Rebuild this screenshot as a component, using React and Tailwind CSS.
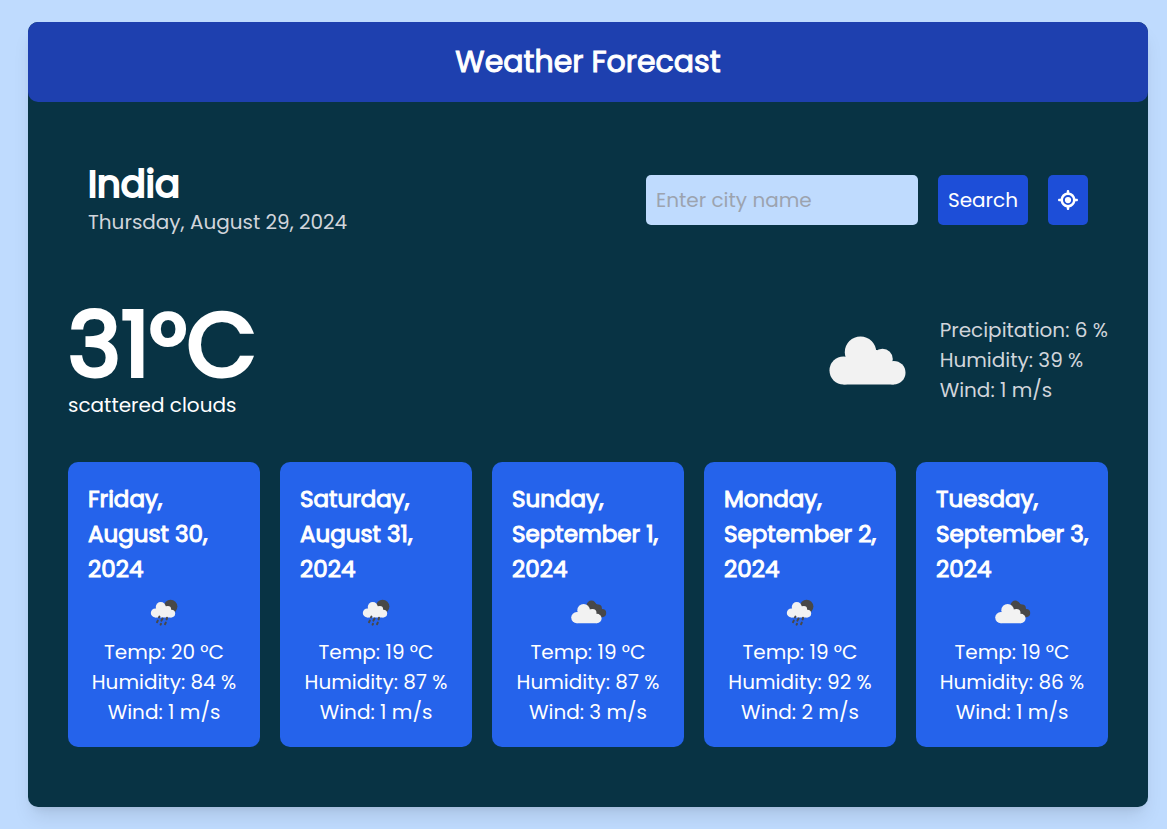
import React from "react";
import { FaLocationCrosshairs } from "react-icons/fa6";

const forecast = [
  { date: "Friday, August 30, 2024", icon: "rain", temp: 20, humidity: 84, wind: 1 },
  { date: "Saturday, August 31, 2024", icon: "rain", temp: 19, humidity: 87, wind: 1 },
  { date: "Sunday, September 1, 2024", icon: "clouds", temp: 19, humidity: 87, wind: 3 },
  { date: "Monday, September 2, 2024", icon: "rain", temp: 19, humidity: 92, wind: 2 },
  { date: "Tuesday, September 3, 2024", icon: "clouds", temp: 19, humidity: 86, wind: 1 },
];

function CloudShape() {
  return (
    <>
      <circle cx="38.5" cy="73.5" r="14" />
      <circle cx="55.5" cy="55.2" r="15.7" />
      <circle cx="77.5" cy="62" r="10.3" />
      <circle cx="88.7" cy="75.7" r="11.8" />
      <path d="M38.5 87.5V61l20-8H72l16.7 14v20.5z" />
    </>
  );
}

function WeatherIcon({ type, label, className }) {
  return (
    <svg viewBox="0 0 125 125" className={className} role="img" aria-label={label}>
      {type === "cloud" && (
        <g fill="#f2f2f2">
          <CloudShape />
        </g>
      )}
      {type === "clouds" && (
        <>
          <g fill="#484848">
            <circle cx="71" cy="46" r="12" />
            <circle cx="88" cy="53" r="9" />
            <circle cx="98" cy="65" r="10" />
            <path d="M65 55l12-16 18 10 6 26-12 2z" />
          </g>
          <g transform="translate(-4 3)" fill="#f2f2f2">
            <CloudShape />
          </g>
        </>
      )}
      {type === "rain" && (
        <>
          <circle cx="79" cy="49" r="17" fill="#484848" />
          <g transform="translate(10 6) scale(.8)" fill="#f2f2f2">
            <CloudShape />
          </g>
          <path
            d="M51 74l-1 2M47 84l-2 4M59 79l-3 5M70 77l-1 4M55 92l-1 2M67 89l-2 4"
            stroke="#484848"
            strokeWidth="5"
            strokeLinecap="round"
          />
        </>
      )}
    </svg>
  );
}

function DayCard({ day }) {
  return (
    <article className="flex flex-col items-center rounded-[10px] bg-[#2563eb] p-5 text-white">
      <h3 className="-mr-1 self-stretch text-[23px] leading-[35px] [-webkit-text-stroke:1px_white]">{day.date}</h3>
      <WeatherIcon type={day.icon} label={day.icon} className="size-[50px]" />
      <p className="whitespace-nowrap">Temp: {day.temp} °C</p>
      <p className="whitespace-nowrap">Humidity: {day.humidity} %</p>
      <p className="whitespace-nowrap">Wind: {day.wind} m/s</p>
    </article>
  );
}

export default function App() {
  return (
    <div className="min-h-screen bg-[#bfdbfe] pt-[22px] pr-[19px] pb-[22px] pl-7 font-['Poppins','Inter',sans-serif] text-[20px] leading-[30px]">
      <main className="rounded-[10px] bg-[#083344] shadow-[0_13px_19px_-4px_rgb(0_0_0/0.1),0_5px_8px_-5px_rgb(0_0_0/0.1)]">
        <header className="rounded-[10px] bg-[#1e40af] p-5 text-center text-white">
          <h1 className="text-[30px] leading-10 [-webkit-text-stroke:1px_white]">Weather Forecast</h1>
        </header>

        <div className="px-10 pt-10 pb-[60px]">
          <section className="flex items-center justify-between p-5">
            <div>
              <h2 className="text-[37px] leading-[45px] text-white [-webkit-text-stroke:2px_white]">India</h2>
              <p className="text-[#d1d5db]">Thursday, August 29, 2024</p>
            </div>
            <form className="flex gap-5" onSubmit={(e) => e.preventDefault()}>
              <input
                type="text"
                aria-label="City name"
                placeholder="Enter city name"
                className="w-[272px] rounded-[5px] bg-[#bfdbfe] p-[10px] text-gray-900 placeholder:text-[#9ca3af]"
              />
              <button type="submit" className="rounded-[5px] bg-[#1d4ed8] p-[10px] text-white">
                Search
              </button>
              <button
                type="button"
                aria-label="Use current location"
                className="rounded-[5px] bg-[#1d4ed8] px-[10px] text-white"
              >
                <FaLocationCrosshairs className="size-5" />
              </button>
            </form>
          </section>

          <section className="mt-10 flex items-center justify-between">
            <div className="text-white">
              <p className="text-[90px] leading-[90px] [-webkit-text-stroke:4px_white]">31°C</p>
              <p>scattered clouds</p>
            </div>
            <div className="flex items-center gap-[10px] text-[#d1d5db]">
              <WeatherIcon type="cloud" label="scattered clouds" className="size-[125px]" />
              <div>
                <p>Precipitation: 6 %</p>
                <p>Humidity: 39 %</p>
                <p>Wind: 1 m/s</p>
              </div>
            </div>
          </section>

          <section className="mt-10 grid grid-cols-5 gap-5">
            {forecast.map((day) => (
              <DayCard key={day.date} day={day} />
            ))}
          </section>
        </div>
      </main>
    </div>
  );
}
